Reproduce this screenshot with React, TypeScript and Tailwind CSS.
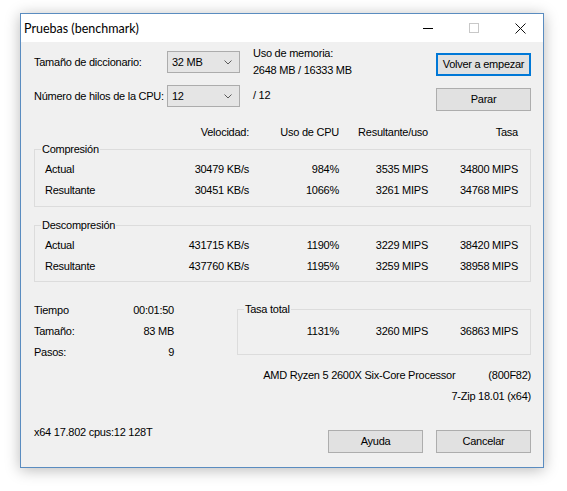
import type { ReactNode } from "react"

const compresion = [
    ["Actual", "30479 KB/s", "984%", "3535 MIPS", "34800 MIPS"],
    ["Resultante", "30451 KB/s", "1066%", "3261 MIPS", "34768 MIPS"],
]

const descompresion = [
    ["Actual", "431715 KB/s", "1190%", "3229 MIPS", "38420 MIPS"],
    ["Resultante", "437760 KB/s", "1195%", "3259 MIPS", "38958 MIPS"],
]

function Combo({ value }: { value: string }) {
    return (
        <div className="flex items-center justify-between w-[73px] h-[22px] pl-[4px] pr-[7px] bg-[#e5e5e5] border border-[#acacac]">
            <span>{value}</span>
            <svg width="8" height="5" viewBox="0 0 8 5">
                <path d="M0.5 0.5 L4 4 L7.5 0.5" fill="none" stroke="#5a5a5a" strokeWidth="1" />
            </svg>
        </div>
    )
}

function Button({ children, focused }: { children: ReactNode; focused?: boolean }) {
    return (
        <div
            className={
                focused
                    ? "flex items-center justify-center w-[95px] h-[23px] bg-[#e1e1e1] border border-[#0078d7] shadow-[inset_0_0_0_1px_#0078d7]"
                    : "flex items-center justify-center w-[95px] h-[23px] bg-[#e1e1e1] border border-[#adadad]"
            }
        >
            {children}
        </div>
    )
}

function Group({ title, rows, className }: { title: string; rows: string[][]; className: string }) {
    return (
        <fieldset className={"border border-[#dcdcdc] pt-[2px] " + className}>
            <legend className="ml-[6px] px-[1px] leading-[15px]">{title}</legend>
            {rows.map((row) => (
                <div key={row[0]} className="grid grid-cols-[115px_99px_90px_89px_90px] h-[21px] items-center">
                    <span className="pl-[10px]">{row[0]}</span>
                    <span className="text-right">{row[1]}</span>
                    <span className="text-right">{row[2]}</span>
                    <span className="text-right">{row[3]}</span>
                    <span className="text-right">{row[4]}</span>
                </div>
            ))}
        </fieldset>
    )
}

export default function App() {
    return (
        <div className="w-[567px] h-[491px] bg-white pt-[13px] pl-[20px] font-['Liberation_Sans',Arial,sans-serif] text-[11px] leading-[15px] tracking-[-0.25px] text-black">
            <div className="w-[524px] h-[455px] border border-[#5a8cc0] bg-[#f0f0f0] shadow-[0_2px_14px_rgba(0,0,0,0.28)] flex flex-col">
                {/* Title bar */}
                <div className="flex items-center h-[28px] bg-white">
                    <span className="pl-[3px] flex-1 font-['Lato',sans-serif] text-[12.5px] tracking-normal">Pruebas (benchmark)</span>
                    <div className="flex items-center justify-center w-[46px] h-full">
                        <div className="w-[10px] h-px bg-black" />
                    </div>
                    <div className="flex items-center justify-center w-[46px] h-full">
                        <div className="w-[10px] h-[10px] border border-[#c8c8c8]" />
                    </div>
                    <div className="flex items-center justify-center w-[46px] h-full">
                        <svg width="11" height="11" viewBox="0 0 11 11">
                            <path d="M0.5 0.5 L10.5 10.5 M10.5 0.5 L0.5 10.5" stroke="#111" strokeWidth="1" />
                        </svg>
                    </div>
                </div>

                {/* Content */}
                <div className="flex flex-col h-[425px] pl-[13px] pr-[12px]">
                    {/* Settings + buttons */}
                    <div className="flex h-[82px]">
                        <div className="w-[206px] pt-[9px]">
                            <div className="flex items-center h-[22px]">
                                <span className="w-[133px] whitespace-nowrap">Tamaño de diccionario:</span>
                                <Combo value="32 MB" />
                            </div>
                            <div className="flex items-center h-[22px] mt-[12px]">
                                <span className="w-[133px] whitespace-nowrap">Número de hilos de la CPU:</span>
                                <Combo value="12" />
                            </div>
                        </div>
                        <div className="flex-1 ml-[13px] pt-[3px] leading-[17px]">
                            <div>Uso de memoria:</div>
                            <div>2648 MB / 16333 MB</div>
                            <div className="mt-[8px]">/ 12</div>
                        </div>
                        <div className="pt-[11px]">
                            <Button focused>Volver a empezar</Button>
                            <div className="mt-[12px]">
                                <Button>Parar</Button>
                            </div>
                        </div>
                    </div>

                    {/* Column headers */}
                    <div className="grid grid-cols-[116px_99px_90px_89px_90px] h-[17px] items-center">
                        <span />
                        <span className="text-right">Velocidad:</span>
                        <span className="text-right">Uso de CPU</span>
                        <span className="text-right">Resultante/uso</span>
                        <span className="text-right">Tasa</span>
                    </div>

                    <Group title="Compresión" rows={compresion} className="mt-[1px] pb-[5px]" />
                    <Group title="Descompresión" rows={descompresion} className="mt-[11px] pb-[4px]" />

                    {/* Totals */}
                    <div className="flex items-start mt-[18px]">
                        <div className="w-[140px]">
                            <div className="flex justify-between h-[21px] items-center">
                                <span>Tiempo</span>
                                <span>00:01:50</span>
                            </div>
                            <div className="flex justify-between h-[21px] items-center">
                                <span>Tamaño:</span>
                                <span>83 MB</span>
                            </div>
                            <div className="flex justify-between h-[21px] items-center">
                                <span>Pasos:</span>
                                <span>9</span>
                            </div>
                        </div>
                        <fieldset className="flex-1 ml-[63px] mt-[2px] border border-[#dcdcdc] pt-[4px] pb-[12px]">
                            <legend className="ml-[6px] px-[1px] leading-[15px]">Tasa total</legend>
                            <div className="flex justify-end h-[21px] items-center pr-[12px]">
                                <span className="w-[90px] text-right">1131%</span>
                                <span className="w-[89px] text-right">3260 MIPS</span>
                                <span className="w-[90px] text-right">36863 MIPS</span>
                            </div>
                        </fieldset>
                    </div>

                    {/* CPU info */}
                    <div className="flex justify-end gap-[33px] h-[21px] items-center mt-[2px]">
                        <span>AMD Ryzen 5 2600X Six-Core Processor</span>
                        <span>(800F82)</span>
                    </div>
                    <div className="flex justify-end h-[20px] items-center">
                        <span>7-Zip 18.01 (x64)</span>
                    </div>

                    {/* Footer */}
                    <div className="flex items-start justify-between mt-auto pb-[14px]">
                        <span>x64 17.802 cpus:12 128T</span>
                        <div className="flex gap-[13px] mt-[5px]">
                            <Button>Ayuda</Button>
                            <Button>Cancelar</Button>
                        </div>
                    </div>
                </div>
            </div>
        </div>
    )
}
